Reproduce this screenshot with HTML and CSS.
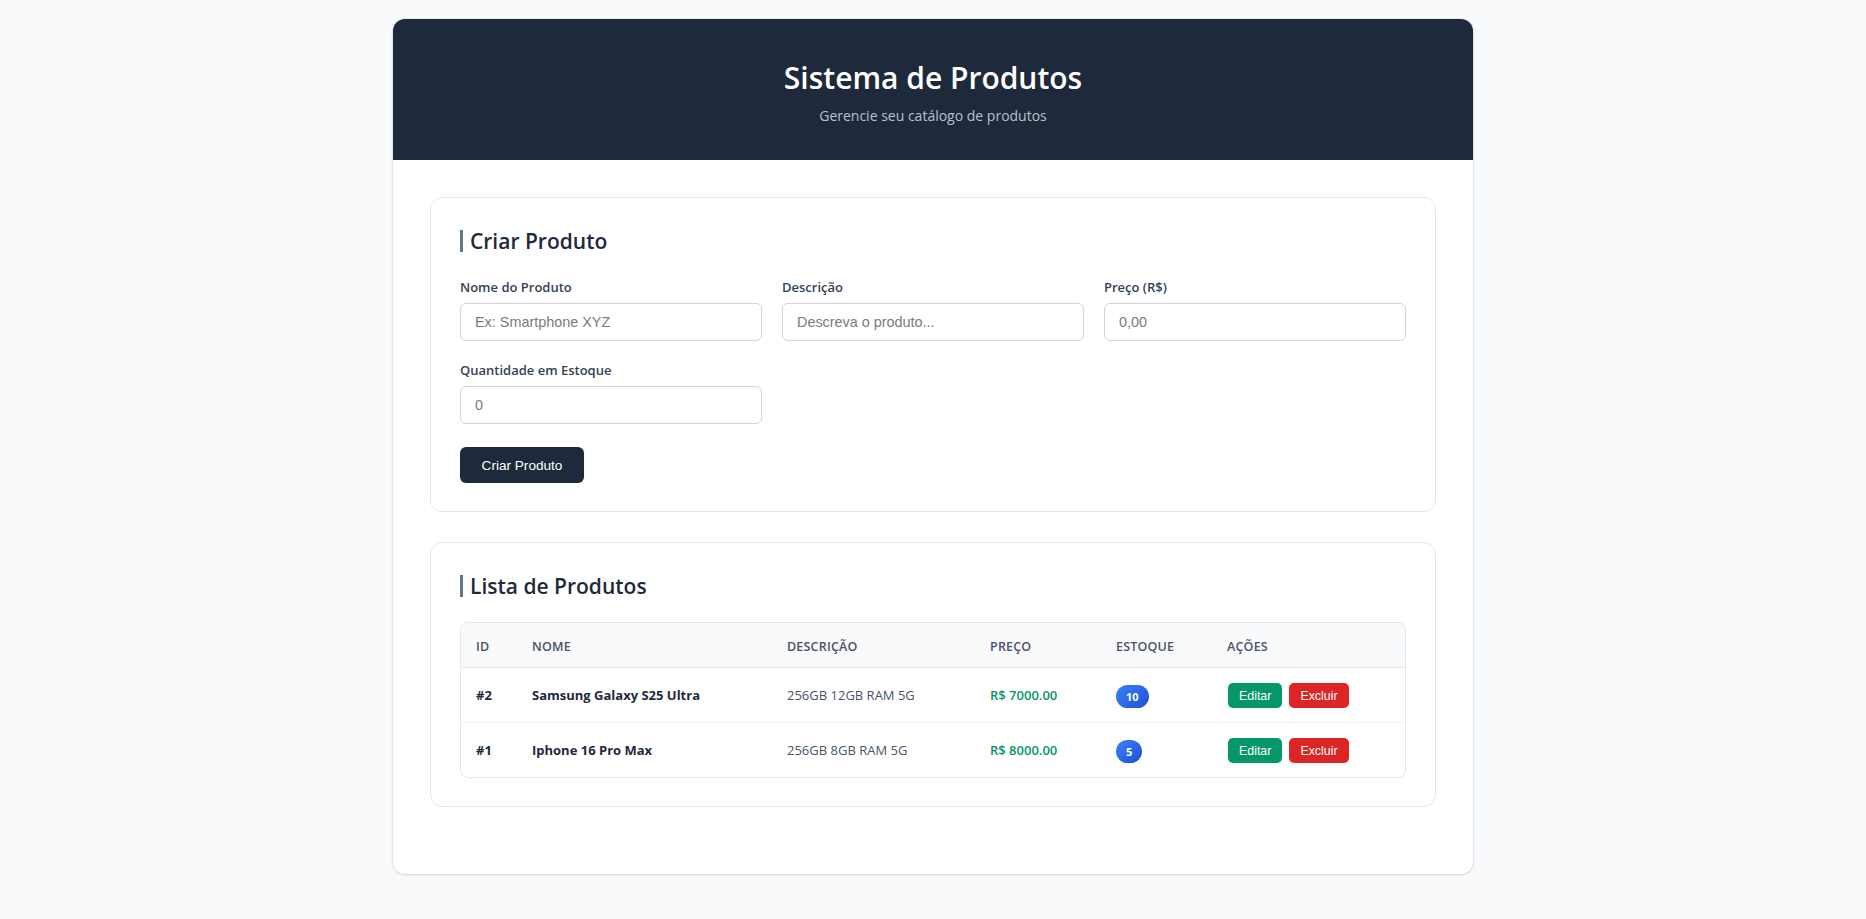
FILE: index.html
```html
<!DOCTYPE html>
<html lang="pt-BR">
<head>
<meta charset="utf-8">
<title>Sistema de Produtos</title>
<link rel="stylesheet" href="styles.css">
</head>
<body>
<div class="app">
  <header class="app-header">
    <h1 class="app-title">Sistema de Produtos</h1>
    <p class="app-subtitle">Gerencie seu catálogo de produtos</p>
  </header>
  <main class="app-main">
    <section class="card">
      <h2 class="card-title">Criar Produto</h2>
      <form class="form">
        <div class="form-grid">
          <div class="field">
            <label class="field-label">Nome do Produto</label>
            <input class="field-input" type="text" placeholder="Ex: Smartphone XYZ">
          </div>
          <div class="field">
            <label class="field-label">Descrição</label>
            <input class="field-input" type="text" placeholder="Descreva o produto...">
          </div>
          <div class="field">
            <label class="field-label">Preço (R$)</label>
            <input class="field-input" type="text" placeholder="0,00">
          </div>
          <div class="field">
            <label class="field-label">Quantidade em Estoque</label>
            <input class="field-input" type="text" placeholder="0">
          </div>
        </div>
        <button class="btn-primary" type="button">Criar Produto</button>
      </form>
    </section>
    <section class="card">
      <h2 class="card-title">Lista de Produtos</h2>
      <div class="table-wrap">
        <table class="table">
          <colgroup>
            <col class="col-id"><col class="col-name"><col class="col-desc"><col class="col-price"><col class="col-stock"><col class="col-actions">
          </colgroup>
          <thead>
            <tr><th>ID</th><th>Nome</th><th>Descrição</th><th>Preço</th><th>Estoque</th><th>Ações</th></tr>
          </thead>
          <tbody>
            <tr>
              <td class="cell-id">#2</td>
              <td class="cell-name">Samsung Galaxy S25 Ultra</td>
              <td class="cell-desc">256GB 12GB RAM 5G</td>
              <td class="cell-price">R$ 7000.00</td>
              <td><span class="badge">10</span></td>
              <td><div class="actions"><button class="btn-sm btn-edit" type="button">Editar</button><button class="btn-sm btn-delete" type="button">Excluir</button></div></td>
            </tr>
            <tr>
              <td class="cell-id">#1</td>
              <td class="cell-name">Iphone 16 Pro Max</td>
              <td class="cell-desc">256GB 8GB RAM 5G</td>
              <td class="cell-price">R$ 8000.00</td>
              <td><span class="badge">5</span></td>
              <td><div class="actions"><button class="btn-sm btn-edit" type="button">Editar</button><button class="btn-sm btn-delete" type="button">Excluir</button></div></td>
            </tr>
          </tbody>
        </table>
      </div>
    </section>
  </main>
</div>
</body>
</html>
```
FILE: styles.css
```css
* { box-sizing: border-box; }
html, body { margin: 0; padding: 0; }
body {
  background: #f8fafc;
  font-family: "Open Sans", "Noto Sans", sans-serif;
  color: #1e293b;
  padding: 19px 0 45px;
}
.app {
  width: 1080px;
  margin: 0 auto;
  background: #ffffff;
  border-radius: 12px;
  box-shadow: 0 1px 3px rgba(15, 23, 42, 0.12), 0 0 0 1px rgba(226, 232, 240, 0.6);
  overflow: hidden;
}
.app-header {
  background: #1e293b;
  color: #ffffff;
  text-align: center;
  padding: 40px 20px 33px;
  height: 141px;
}
.app-title {
  margin: 0 0 8px;
  font-size: 30px;
  line-height: 38px;
  font-weight: 600;
}
.app-subtitle {
  margin: 0;
  font-size: 14px;
  line-height: 22px;
  color: #b8c1cf;
}
.app-main {
  padding: 37px 37px 67px;
  display: flex;
  flex-direction: column;
  gap: 30px;
}
.card {
  border: 1px solid #e2e8f0;
  border-radius: 12px;
  padding: 32px 29px 28px;
  background: #ffffff;
}
.card-title {
  margin: 0 0 25px;
  font-size: 21px;
  line-height: 22px;
  font-weight: 600;
  color: #1e293b;
  border-left: 3px solid #64748b;
  padding-left: 7px;
}
.form-grid {
  display: grid;
  grid-template-columns: repeat(3, 1fr);
  column-gap: 20px;
  row-gap: 19px;
}
.field { display: flex; flex-direction: column; }
.field-label {
  font-size: 13px;
  line-height: 20px;
  font-weight: 600;
  color: #334155;
  margin-bottom: 6px;
}
.field-input {
  height: 38px;
  border: 1px solid #d1d5db;
  border-radius: 6px;
  padding: 0 14px;
  font-family: "Liberation Sans", Arial, sans-serif;
  font-size: 14.4px;
  color: #1e293b;
  background: #ffffff;
  outline: none;
}
.field-input::placeholder { color: #7b7b7b; }
.btn-primary {
  margin-top: 23px;
  height: 36px;
  padding: 0 20px;
  background: #1e293b;
  color: #ffffff;
  border: none;
  border-radius: 6px;
  font-family: "Liberation Sans", Arial, sans-serif;
  font-size: 13.6px;
  width: 124px;
}
.table-wrap {
  border: 1px solid #e2e8f0;
  border-radius: 8px;
  overflow: hidden;
}
.table {
  width: 100%;
  border-collapse: separate;
  border-spacing: 0;
  table-layout: fixed;
}
.col-id { width: 56px; }
.col-name { width: 255px; }
.col-desc { width: 203px; }
.col-price { width: 126px; }
.col-stock { width: 111px; }
.col-actions { width: auto; }
.table th {
  background: #f8fafc;
  text-align: left;
  font-size: 12.5px;
  line-height: 20px;
  font-weight: 600;
  color: #475569;
  text-transform: uppercase;
  letter-spacing: 0.2px;
  padding: 14px 15px 10px;
  border-bottom: 1px solid #e2e8f0;
}
.table td {
  font-size: 13px;
  line-height: 25px;
  padding: 15px 15px 14px;
  color: #334155;
  vertical-align: middle;
}
.table tbody tr:not(:last-child) td { border-bottom: 1px solid #eef2f6; }
.table .cell-id { font-weight: 700; color: #1e293b; }
.table .cell-name { font-weight: 700; color: #1e293b; }
.table .cell-desc { color: #475569; }
.table .cell-price { font-weight: 600; color: #059669; }
.badge {
  display: inline-block;
  height: 23px;
  line-height: 23px;
  padding: 0 10px;
  border-radius: 12px;
  background: linear-gradient(135deg, #3b82f6, #1d4ed8);
  color: #ffffff;
  font-size: 11px;
  font-weight: 700;
  vertical-align: middle;
}
.actions { display: flex; gap: 7px; align-items: center; height: 25px; padding-left: 1px; }
.btn-sm {
  height: 25px;
  padding: 0 11px;
  border: none;
  border-radius: 5px;
  color: #ffffff;
  font-family: "Liberation Sans", Arial, sans-serif;
  font-size: 12.4px;
}
.btn-edit { background: #059669; }
.btn-delete { background: #dc2626; }
```
